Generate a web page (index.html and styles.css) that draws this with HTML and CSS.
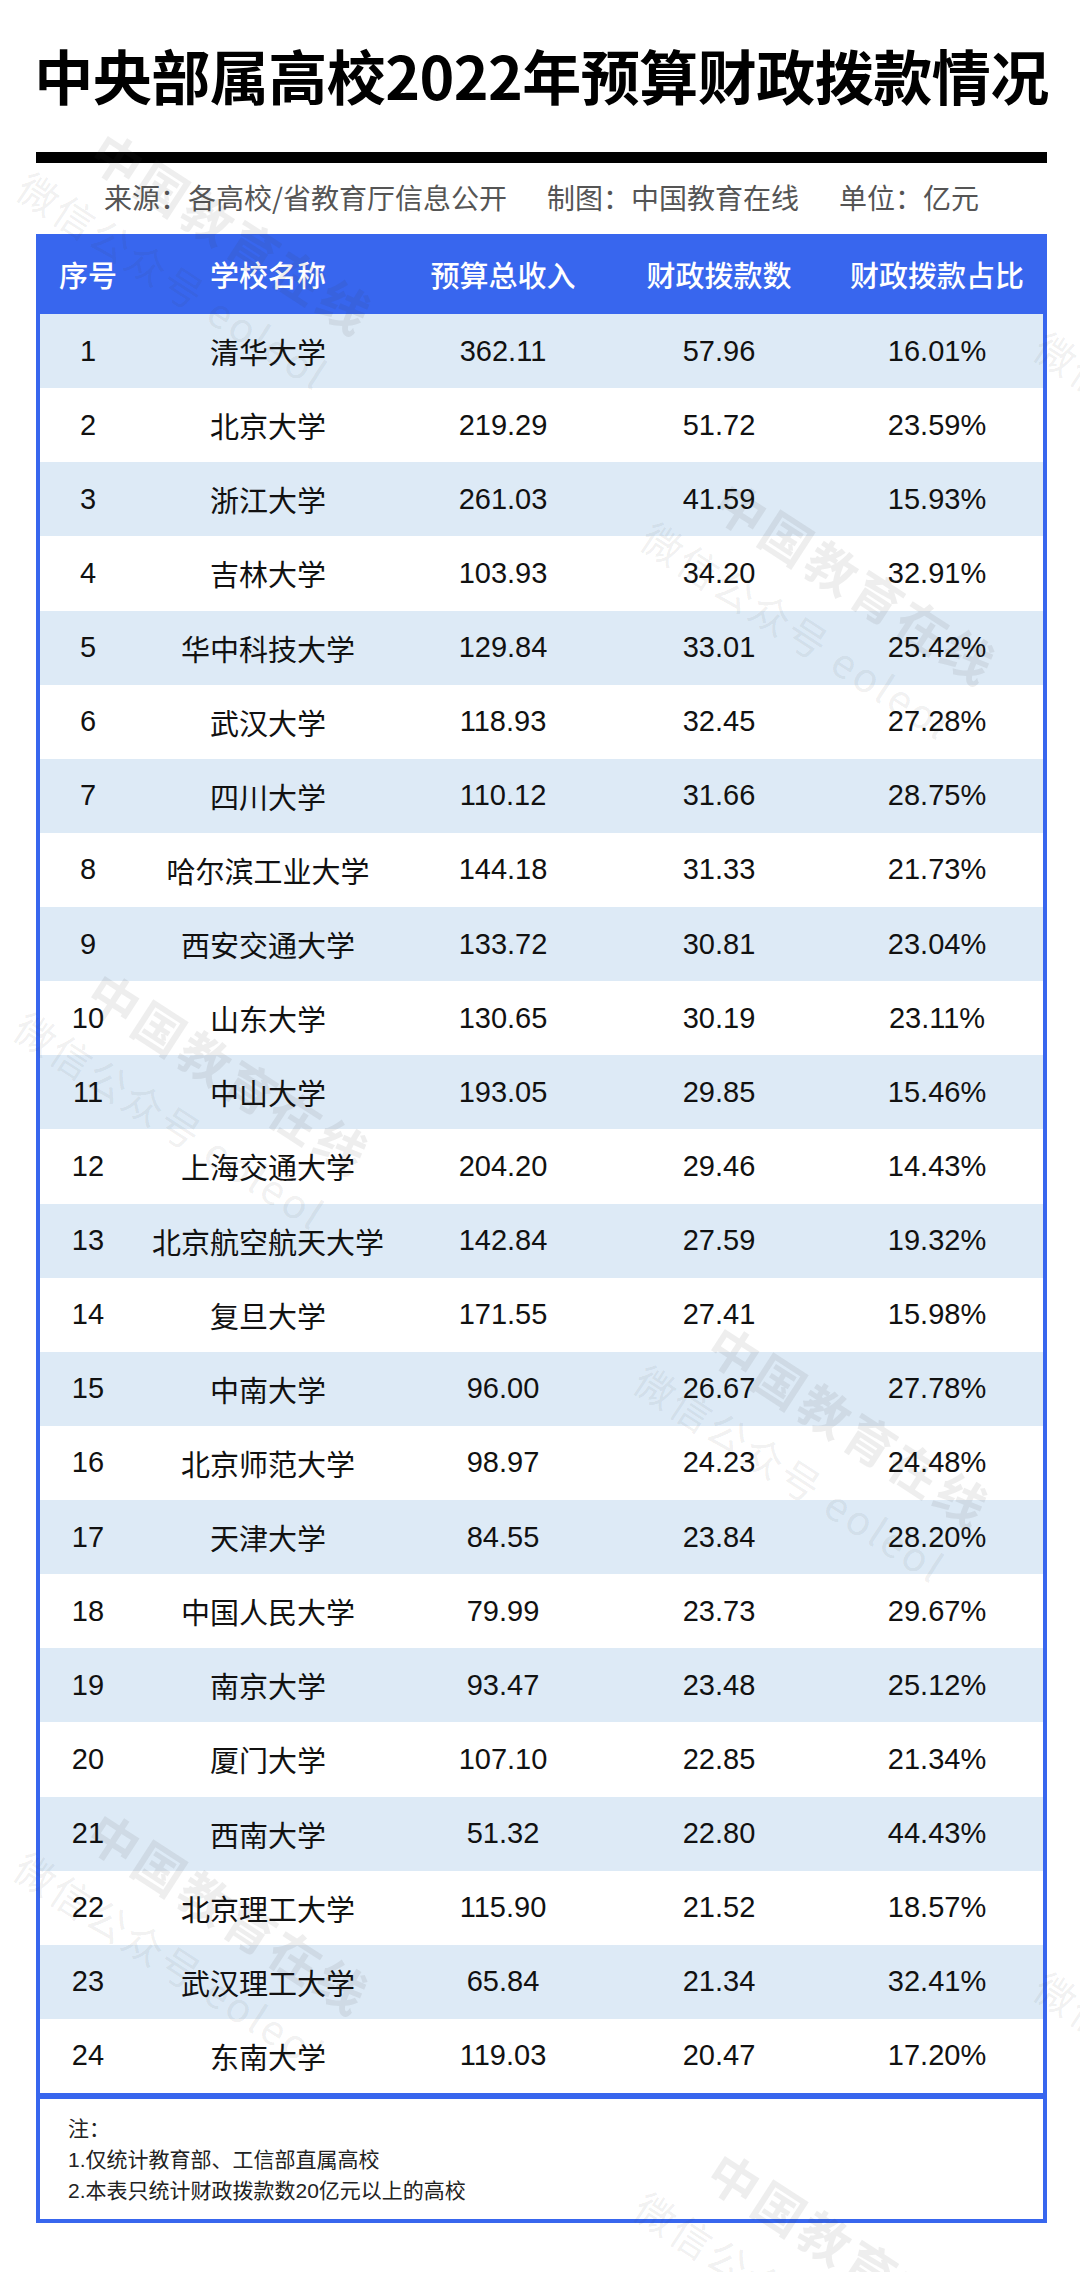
FILE: index.html
```html
<!DOCTYPE html>
<html lang="zh-CN">
<head>
<meta charset="utf-8">
<title>中央部属高校2022年预算财政拨款情况</title>
<link rel="stylesheet" href="styles.css">
</head>
<body>
<div class="page">
  <h1 class="title">中央部属高校2022年预算财政拨款情况</h1>
  <div class="rule"></div>
  <p class="meta"><span>来源：各高校/省教育厅信息公开</span><span>制图：中国教育在线</span><span>单位：亿元</span></p>
  <div class="table">
    <div class="row head"><span>序号</span><span>学校名称</span><span>预算总收入</span><span>财政拨款数</span><span>财政拨款占比</span></div>
    <div class="body">
      <div class="row"><span>1</span><span>清华大学</span><span>362.11</span><span>57.96</span><span>16.01%</span></div>
      <div class="row"><span>2</span><span>北京大学</span><span>219.29</span><span>51.72</span><span>23.59%</span></div>
      <div class="row"><span>3</span><span>浙江大学</span><span>261.03</span><span>41.59</span><span>15.93%</span></div>
      <div class="row"><span>4</span><span>吉林大学</span><span>103.93</span><span>34.20</span><span>32.91%</span></div>
      <div class="row"><span>5</span><span>华中科技大学</span><span>129.84</span><span>33.01</span><span>25.42%</span></div>
      <div class="row"><span>6</span><span>武汉大学</span><span>118.93</span><span>32.45</span><span>27.28%</span></div>
      <div class="row"><span>7</span><span>四川大学</span><span>110.12</span><span>31.66</span><span>28.75%</span></div>
      <div class="row"><span>8</span><span>哈尔滨工业大学</span><span>144.18</span><span>31.33</span><span>21.73%</span></div>
      <div class="row"><span>9</span><span>西安交通大学</span><span>133.72</span><span>30.81</span><span>23.04%</span></div>
      <div class="row"><span>10</span><span>山东大学</span><span>130.65</span><span>30.19</span><span>23.11%</span></div>
      <div class="row"><span>11</span><span>中山大学</span><span>193.05</span><span>29.85</span><span>15.46%</span></div>
      <div class="row"><span>12</span><span>上海交通大学</span><span>204.20</span><span>29.46</span><span>14.43%</span></div>
      <div class="row"><span>13</span><span>北京航空航天大学</span><span>142.84</span><span>27.59</span><span>19.32%</span></div>
      <div class="row"><span>14</span><span>复旦大学</span><span>171.55</span><span>27.41</span><span>15.98%</span></div>
      <div class="row"><span>15</span><span>中南大学</span><span>96.00</span><span>26.67</span><span>27.78%</span></div>
      <div class="row"><span>16</span><span>北京师范大学</span><span>98.97</span><span>24.23</span><span>24.48%</span></div>
      <div class="row"><span>17</span><span>天津大学</span><span>84.55</span><span>23.84</span><span>28.20%</span></div>
      <div class="row"><span>18</span><span>中国人民大学</span><span>79.99</span><span>23.73</span><span>29.67%</span></div>
      <div class="row"><span>19</span><span>南京大学</span><span>93.47</span><span>23.48</span><span>25.12%</span></div>
      <div class="row"><span>20</span><span>厦门大学</span><span>107.10</span><span>22.85</span><span>21.34%</span></div>
      <div class="row"><span>21</span><span>西南大学</span><span>51.32</span><span>22.80</span><span>44.43%</span></div>
      <div class="row"><span>22</span><span>北京理工大学</span><span>115.90</span><span>21.52</span><span>18.57%</span></div>
      <div class="row"><span>23</span><span>武汉理工大学</span><span>65.84</span><span>21.34</span><span>32.41%</span></div>
      <div class="row"><span>24</span><span>东南大学</span><span>119.03</span><span>20.47</span><span>17.20%</span></div>
    </div>
    <div class="notes">
      <p>注：</p>
      <p>1.仅统计教育部、工信部直属高校</p>
      <p>2.本表只统计财政拨款数20亿元以上的高校</p>
    </div>
  </div>

  <div class="wm w1"><div class="wm-a">中国教育在线</div><div class="wm-b">微信公众号 eoleol</div></div>
  <div class="wm w2"><div class="wm-a">中国教育在线</div><div class="wm-b">微信公众号 eoleol</div></div>
  <div class="wm w3"><div class="wm-a">中国教育在线</div><div class="wm-b">微信公众号 eoleol</div></div>
  <div class="wm w4"><div class="wm-a">中国教育在线</div><div class="wm-b">微信公众号 eoleol</div></div>
  <div class="wm w5"><div class="wm-a">中国教育在线</div><div class="wm-b">微信公众号 eoleol</div></div>
  <div class="wm w6"><div class="wm-a">中国教育在线</div><div class="wm-b">微信公众号 eoleol</div></div>
  <div class="wm w7"><div class="wm-a">中国教育在线</div><div class="wm-b">微信公众号 eoleol</div></div>
  <div class="wm w8"><div class="wm-a">中国教育在线</div><div class="wm-b">微信公众号 eoleol</div></div>
</div>
</body>
</html>
```

FILE: styles.css
```css
html, body {
  margin: 0;
  padding: 0;
  background: #ffffff;
}

body {
  font-family: "Liberation Sans", "Noto Sans CJK SC", sans-serif;
  color: #111111;
}

.page {
  position: relative;
  width: 1080px;
  height: 2272px;
  overflow: hidden;
  box-sizing: border-box;
  padding: 38px 33px 0 36px;
}

.title {
  margin: 0 -20px;
  font-family: "Noto Sans CJK SC", sans-serif;
  font-weight: 700;
  font-size: 59px;
  line-height: 73px;
  letter-spacing: -0.5px;
  text-align: center;
  white-space: nowrap;
  color: #000000;
}

.rule {
  height: 11px;
  margin-top: 41px;
  background: #000000;
}

.meta {
  display: flex;
  justify-content: center;
  gap: 40px;
  margin: 14px 0 0;
  font-family: "Noto Sans CJK SC", sans-serif;
  font-size: 28px;
  line-height: 40px;
  color: #555555;
}

.table {
  margin-top: 17px;
  border: 4px solid #3866ee;
  border-top: none;
  background: #ffffff;
}

.row {
  display: grid;
  grid-template-columns: 96px 264px 206px 226px 210px;
  align-items: center;
  text-align: center;
  height: 74.125px;
  font-size: 29px;
  color: #111111;
}

.row span {
  white-space: nowrap;
}

.row.head {
  height: 80px;
  margin: 0 -4px;
  padding: 0 4px;
  background: #3866ee;
  color: #ffffff;
  font-family: "Noto Sans CJK SC", sans-serif;
  font-weight: 500;
  font-size: 29px;
}

.body .row:nth-child(odd) {
  background: #ddeaf6;
}

.notes {
  border-top: 6px solid #3866ee;
  padding: 14px 0 13px 28px;
  font-size: 21px;
  line-height: 31px;
  color: #222222;
}

.notes p {
  margin: 0;
}

/* watermark overlay */
.wm {
  position: absolute;
  transform: rotate(33deg);
  transform-origin: 0 0;
  pointer-events: none;
  font-family: "Noto Sans CJK SC", sans-serif;
  color: rgba(60, 60, 60, 0.085);
  white-space: nowrap;
}

.wm-a {
  font-size: 50px;
  font-weight: 700;
  line-height: 56px;
  letter-spacing: 4px;
}

.wm-b {
  margin: 22px 0 0 -42px;
  font-size: 40px;
  line-height: 46px;
  letter-spacing: 3px;
}

.w1 { left: 113px; top: 120px; }
.w2 { left: 737px; top: 470px; }
.w3 { left: 110px; top: 960px; }
.w4 { left: 730px; top: 1313px; }
.w5 { left: 110px; top: 1800px; }
.w6 { left: 730px; top: 2140px; }
.w7 { left: 1130px; top: 280px; }
.w8 { left: 1130px; top: 1920px; }
```
